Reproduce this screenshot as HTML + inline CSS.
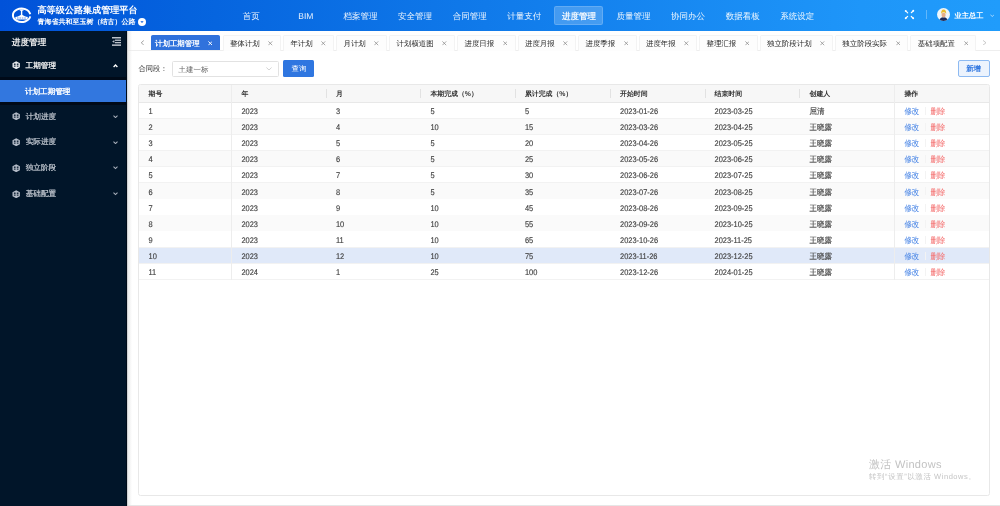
<!DOCTYPE html><html><head><meta charset="utf-8"><style>
*{margin:0;padding:0;box-sizing:border-box}
html,body{width:1000px;height:506px;overflow:hidden;background:#fff}
body{font-family:"Liberation Sans",sans-serif;text-rendering:geometricPrecision;position:relative;color:#333}
.t{position:absolute;white-space:nowrap;line-height:1}
#hdr{position:absolute;left:0;top:0;width:1000px;height:31px;background:linear-gradient(90deg,#0152d9 0%,#0563de 19%,#107aea 48.5%,#1e96f9 86%,#209cfb 100%)}
#side{position:absolute;left:0;top:31px;width:127.5px;height:475px;background:#011529}
.nav{position:absolute;top:0.7px;height:31px;width:54.6px;text-align:center;color:rgba(255,255,255,.92);font-size:8.5px;font-weight:500;line-height:31px;white-space:nowrap}
.navbox{position:absolute;top:5.9px;height:19.2px;background:rgba(255,255,255,.21);border:0.8px solid rgba(255,255,255,.16);border-radius:2.2px}
.tab{position:absolute;top:34.5px;height:16px;background:#fdfdfd;border:0.7px solid #f3f3f3;border-bottom:none;border-radius:1.5px 1.5px 0 0}
.tt{position:absolute;font-size:7.45px;color:#1f1f1f;font-weight:500;line-height:1;white-space:nowrap}
.th{position:absolute;font-size:6.9px;font-weight:bold;color:#333;line-height:1;white-space:nowrap}
.td{position:absolute;font-size:7.45px;color:#404040;-webkit-text-stroke:0.13px #404040;line-height:1;white-space:nowrap;transform:scaleY(1.1);transform-origin:0 0}
.sep{position:absolute;background:#e4e4e4}
.mi{position:absolute;font-size:7.6px;color:#bfc5ce;-webkit-text-stroke:0.22px #bfc5ce;line-height:1;white-space:nowrap}
</style></head><body><div id="root" style="position:absolute;left:0;top:0;width:1000px;height:506px;will-change:transform;background:#fff">
<div id="hdr"></div>
<svg style="position:absolute;left:0;top:0" width="40" height="31" viewBox="0 0 40 31">
<path d="M30.2 14.2 A8.7 6.75 0 1 0 30.2 16.4" fill="none" stroke="#fff" stroke-width="2"/>
<rect x="20.9" y="9.8" width="1.4" height="5.6" fill="#fff"/><rect x="19.8" y="9.5" width="3.6" height="1.2" fill="#fff"/>
<path d="M17 16.9 L21.6 14.6 L26.2 16.9Z" fill="#fff"/>
<rect x="15.5" y="16.7" width="12.1" height="2.7" rx="0.5" fill="#fff"/>
<path d="M17 17.6 h1.6 v0.9 h-1.6z M19.4 17.6 h1.6 v0.9 h-1.6z M21.8 17.6 h1.6 v0.9 h-1.6z M24.2 17.6 h1.6 v0.9 h-1.6z" fill="#6d95e6"/>
</svg>
<div class="t" style="left:37.5px;top:6.4px;font-size:9.1px;font-weight:900;color:#fff">高等级公路集成管理平台</div>
<div class="t" style="left:37.6px;top:18.9px;font-size:7px;font-weight:900;color:#fff">青海省共和至玉树（结古）公路</div>
<svg style="position:absolute;left:138px;top:18.2px" width="8" height="8" viewBox="0 0 8 8"><circle cx="4" cy="4" r="4" fill="#fff"/><path d="M2.4 3.2 L5.6 3.2 L4 5.1Z" fill="#0a5ddb"/></svg>
<div class="nav" style="left:224.00px">首页</div>
<div class="nav" style="left:278.60px">BIM</div>
<div class="nav" style="left:333.20px">档案管理</div>
<div class="nav" style="left:387.80px">安全管理</div>
<div class="nav" style="left:442.40px">合同管理</div>
<div class="nav" style="left:497.00px">计量支付</div>
<div class="navbox" style="left:553.90px;width:49.00px"></div>
<div class="nav" style="left:551.60px;font-weight:bold">进度管理</div>
<div class="nav" style="left:606.20px">质量管理</div>
<div class="nav" style="left:660.80px">协同办公</div>
<div class="nav" style="left:715.40px">数据看板</div>
<div class="nav" style="left:770.00px">系统设定</div>
<svg style="position:absolute;left:904px;top:9px" width="11" height="11" viewBox="0 0 11 11" fill="#fff" stroke="#fff" stroke-width="1.2" stroke-linecap="round">
<path d="M1.9 2.1 L3.7 3.9 M9.1 2.0 L7.3 3.7 M1.9 9.0 L3.6 7.4 M9.0 9.1 L7.3 7.5"/>
<circle cx="1.7" cy="1.9" r="0.95" stroke="none"/><circle cx="9.3" cy="1.8" r="0.95" stroke="none"/><circle cx="1.7" cy="9.2" r="0.95" stroke="none"/><circle cx="9.2" cy="9.3" r="0.95" stroke="none"/>
</svg>
<div style="position:absolute;left:925.8px;top:10.2px;width:0.8px;height:8.4px;background:rgba(255,255,255,.3)"></div>
<svg style="position:absolute;left:937px;top:8.4px" width="13" height="13" viewBox="0 0 13 13">
<defs><clipPath id="cc"><circle cx="6.5" cy="6.5" r="6.5"/></clipPath></defs>
<g clip-path="url(#cc)"><rect width="13" height="13" fill="#eef6fb"/>
<path d="M2.2 13 Q2.6 9.4 6.5 9.2 Q10.4 9.4 10.8 13Z" fill="#1d2a58"/>
<ellipse cx="6.6" cy="7.1" rx="2.1" ry="2.4" fill="#e6ae8a"/>
<path d="M4.1 5.9 Q3.9 1.4 6.6 1.4 Q9.4 1.4 9.2 5.9 Q8.6 4.2 6.6 4.3 Q4.7 4.2 4.1 5.9Z" fill="#e9bd2e"/>
</g></svg>
<div class="t" style="left:954.5px;top:12px;font-size:7.25px;font-weight:900;color:#fff">业主总工</div>
<svg style="position:absolute;left:989.5px;top:14px" width="4.5" height="3.5" viewBox="0 0 4.5 3.5"><path d="M0.4 0.6 L2.25 2.6 L4.1 0.6" fill="none" stroke="rgba(255,255,255,.8)" stroke-width="0.7"/></svg>
<div id="side"></div>
<div class="t" style="left:11.8px;top:38.3px;font-size:8.65px;color:#ececec;font-weight:700">进度管理</div>
<svg style="position:absolute;left:111.8px;top:36.9px" width="9.2" height="9.2" viewBox="0 0 9.2 9.2" fill="#bcc2cb">
<rect x="0" y="0" width="9.2" height="1.5"/><rect x="3" y="2.6" width="6.2" height="1.3"/><rect x="3" y="5.0" width="6.2" height="1.3"/><rect x="0" y="7.4" width="9.2" height="1.5"/>
<path d="M0.2 4.45 L2.4 2.9 L2.4 6.0Z"/></svg>
<svg style="position:absolute;left:11.8px;top:60.8px" width="8.4" height="8.4" viewBox="0 0 8.4 8.4">
<path d="M4.2 0.2 L7.9 2.2 L7.9 6.2 L4.2 8.2 L0.5 6.2 L0.5 2.2Z" fill="#e8ebef"/>
<path d="M1.9 2.6 L3.6 2.6 L3.6 3.9 L1.9 3.9Z M4.8 2.6 L6.5 2.6 L6.5 3.9 L4.8 3.9Z M1.9 4.5 L3.6 4.5 L3.6 5.8 L1.9 5.8Z M4.8 4.5 L6.5 4.5 L6.5 5.8 L4.8 5.8Z" fill="#011529" opacity="0.85"/>
</svg>
<div class="mi" style="left:25.6px;top:61.9px;color:#f4f4f4;-webkit-text-stroke:0.25px #f4f4f4">工期管理</div>
<svg style="position:absolute;left:112.6px;top:64.2px" width="5" height="3.5" viewBox="0 0 5 3.5"><path d="M0.6 3 L2.5 1 L4.4 3" fill="none" stroke="#fff" stroke-width="1.3"/></svg>
<div style="position:absolute;left:0;top:77px;width:127.5px;height:28px;background:#000a18"></div>
<div style="position:absolute;left:0;top:80px;width:127.5px;height:22px;background:#3277df"></div>
<div class="mi" style="left:24.9px;top:87.5px;color:#fff;-webkit-text-stroke:0.3px #fff">计划工期管理</div>
<svg style="position:absolute;left:11.8px;top:112.1px" width="8.4" height="8.4" viewBox="0 0 8.4 8.4">
<path d="M4.2 0.2 L7.9 2.2 L7.9 6.2 L4.2 8.2 L0.5 6.2 L0.5 2.2Z" fill="#b4bcc8"/>
<path d="M1.9 2.6 L3.6 2.6 L3.6 3.9 L1.9 3.9Z M4.8 2.6 L6.5 2.6 L6.5 3.9 L4.8 3.9Z M1.9 4.5 L3.6 4.5 L3.6 5.8 L1.9 5.8Z M4.8 4.5 L6.5 4.5 L6.5 5.8 L4.8 5.8Z" fill="#011529" opacity="0.85"/>
</svg>
<div class="mi" style="left:25.7px;top:112.50px">计划进度</div>
<svg style="position:absolute;left:112.8px;top:114.80px" width="5" height="3.5" viewBox="0 0 5 3.5"><path d="M0.5 0.6 L2.5 2.6 L4.5 0.6" fill="none" stroke="#aab1bc" stroke-width="1.05"/></svg>
<svg style="position:absolute;left:11.8px;top:137.8px" width="8.4" height="8.4" viewBox="0 0 8.4 8.4">
<path d="M4.2 0.2 L7.9 2.2 L7.9 6.2 L4.2 8.2 L0.5 6.2 L0.5 2.2Z" fill="#b4bcc8"/>
<path d="M1.9 2.6 L3.6 2.6 L3.6 3.9 L1.9 3.9Z M4.8 2.6 L6.5 2.6 L6.5 3.9 L4.8 3.9Z M1.9 4.5 L3.6 4.5 L3.6 5.8 L1.9 5.8Z M4.8 4.5 L6.5 4.5 L6.5 5.8 L4.8 5.8Z" fill="#011529" opacity="0.85"/>
</svg>
<div class="mi" style="left:25.7px;top:138.20px">实际进度</div>
<svg style="position:absolute;left:112.8px;top:140.50px" width="5" height="3.5" viewBox="0 0 5 3.5"><path d="M0.5 0.6 L2.5 2.6 L4.5 0.6" fill="none" stroke="#aab1bc" stroke-width="1.05"/></svg>
<svg style="position:absolute;left:11.8px;top:163.60000000000002px" width="8.4" height="8.4" viewBox="0 0 8.4 8.4">
<path d="M4.2 0.2 L7.9 2.2 L7.9 6.2 L4.2 8.2 L0.5 6.2 L0.5 2.2Z" fill="#b4bcc8"/>
<path d="M1.9 2.6 L3.6 2.6 L3.6 3.9 L1.9 3.9Z M4.8 2.6 L6.5 2.6 L6.5 3.9 L4.8 3.9Z M1.9 4.5 L3.6 4.5 L3.6 5.8 L1.9 5.8Z M4.8 4.5 L6.5 4.5 L6.5 5.8 L4.8 5.8Z" fill="#011529" opacity="0.85"/>
</svg>
<div class="mi" style="left:25.7px;top:164.00px">独立阶段</div>
<svg style="position:absolute;left:112.8px;top:166.30px" width="5" height="3.5" viewBox="0 0 5 3.5"><path d="M0.5 0.6 L2.5 2.6 L4.5 0.6" fill="none" stroke="#aab1bc" stroke-width="1.05"/></svg>
<svg style="position:absolute;left:11.8px;top:189.70000000000002px" width="8.4" height="8.4" viewBox="0 0 8.4 8.4">
<path d="M4.2 0.2 L7.9 2.2 L7.9 6.2 L4.2 8.2 L0.5 6.2 L0.5 2.2Z" fill="#b4bcc8"/>
<path d="M1.9 2.6 L3.6 2.6 L3.6 3.9 L1.9 3.9Z M4.8 2.6 L6.5 2.6 L6.5 3.9 L4.8 3.9Z M1.9 4.5 L3.6 4.5 L3.6 5.8 L1.9 5.8Z M4.8 4.5 L6.5 4.5 L6.5 5.8 L4.8 5.8Z" fill="#011529" opacity="0.85"/>
</svg>
<div class="mi" style="left:25.7px;top:190.10px">基础配置</div>
<svg style="position:absolute;left:112.8px;top:192.40px" width="5" height="3.5" viewBox="0 0 5 3.5"><path d="M0.5 0.6 L2.5 2.6 L4.5 0.6" fill="none" stroke="#aab1bc" stroke-width="1.05"/></svg>
<div style="position:absolute;left:127.5px;top:50.1px;width:872.5px;height:1px;background:#eeeeee"></div>
<div style="position:absolute;left:127.3px;top:31px;width:4.5px;height:475px;background:linear-gradient(90deg,#e6e6e6,rgba(255,255,255,0))"></div>
<div style="position:absolute;left:126.3px;top:31px;width:1px;height:475px;background:#000b18"></div>
<svg style="position:absolute;left:139.5px;top:39.8px" width="5" height="5.5" viewBox="0 0 5 5.5"><path d="M3.8 0.5 L1.2 2.75 L3.8 5.0" fill="none" stroke="#999" stroke-width="0.9"/></svg>
<svg style="position:absolute;left:982px;top:39.8px" width="5" height="5.5" viewBox="0 0 5 5.5"><path d="M1 0.4 L4 2.75 L1 5.1" fill="none" stroke="#bbb" stroke-width="0.8"/></svg>
<div style="position:absolute;left:151px;top:34.6px;width:69.2px;height:15.8px;background:#3072dc;border-radius:1.8px 1.8px 0 0"></div>
<div class="tt" style="left:155px;top:40.0px;color:#fff;font-weight:bold">计划工期管理</div>
<svg style="position:absolute;left:207.70px;top:41.20px" width="4.6" height="4.6" viewBox="0 0 4.6 4.6"><path d="M0.4 0.4 L4.2 4.2 M4.2 0.4 L0.4 4.2" fill="none" stroke="#fff" stroke-width="0.95"/></svg>
<div class="tab" style="left:222.60px;width:58.40px"></div>
<div class="tt" style="left:229.90px;top:39.9px">整体计划</div>
<svg style="position:absolute;left:268.20px;top:41.10px" width="4.6" height="4.6" viewBox="0 0 4.6 4.6"><path d="M0.4 0.4 L4.2 4.2 M4.2 0.4 L0.4 4.2" fill="none" stroke="#8a8a8a" stroke-width="0.75"/></svg>
<div class="tab" style="left:283.10px;width:50.95px"></div>
<div class="tt" style="left:290.40px;top:39.9px">年计划</div>
<svg style="position:absolute;left:321.25px;top:41.10px" width="4.6" height="4.6" viewBox="0 0 4.6 4.6"><path d="M0.4 0.4 L4.2 4.2 M4.2 0.4 L0.4 4.2" fill="none" stroke="#8a8a8a" stroke-width="0.75"/></svg>
<div class="tab" style="left:336.15px;width:50.95px"></div>
<div class="tt" style="left:343.45px;top:39.9px">月计划</div>
<svg style="position:absolute;left:374.30px;top:41.10px" width="4.6" height="4.6" viewBox="0 0 4.6 4.6"><path d="M0.4 0.4 L4.2 4.2 M4.2 0.4 L0.4 4.2" fill="none" stroke="#8a8a8a" stroke-width="0.75"/></svg>
<div class="tab" style="left:389.20px;width:65.85px"></div>
<div class="tt" style="left:396.50px;top:39.9px">计划横道图</div>
<svg style="position:absolute;left:442.25px;top:41.10px" width="4.6" height="4.6" viewBox="0 0 4.6 4.6"><path d="M0.4 0.4 L4.2 4.2 M4.2 0.4 L0.4 4.2" fill="none" stroke="#8a8a8a" stroke-width="0.75"/></svg>
<div class="tab" style="left:457.15px;width:58.40px"></div>
<div class="tt" style="left:464.45px;top:39.9px">进度日报</div>
<svg style="position:absolute;left:502.75px;top:41.10px" width="4.6" height="4.6" viewBox="0 0 4.6 4.6"><path d="M0.4 0.4 L4.2 4.2 M4.2 0.4 L0.4 4.2" fill="none" stroke="#8a8a8a" stroke-width="0.75"/></svg>
<div class="tab" style="left:517.65px;width:58.40px"></div>
<div class="tt" style="left:524.95px;top:39.9px">进度月报</div>
<svg style="position:absolute;left:563.25px;top:41.10px" width="4.6" height="4.6" viewBox="0 0 4.6 4.6"><path d="M0.4 0.4 L4.2 4.2 M4.2 0.4 L0.4 4.2" fill="none" stroke="#8a8a8a" stroke-width="0.75"/></svg>
<div class="tab" style="left:578.15px;width:58.40px"></div>
<div class="tt" style="left:585.45px;top:39.9px">进度季报</div>
<svg style="position:absolute;left:623.75px;top:41.10px" width="4.6" height="4.6" viewBox="0 0 4.6 4.6"><path d="M0.4 0.4 L4.2 4.2 M4.2 0.4 L0.4 4.2" fill="none" stroke="#8a8a8a" stroke-width="0.75"/></svg>
<div class="tab" style="left:638.65px;width:58.40px"></div>
<div class="tt" style="left:645.95px;top:39.9px">进度年报</div>
<svg style="position:absolute;left:684.25px;top:41.10px" width="4.6" height="4.6" viewBox="0 0 4.6 4.6"><path d="M0.4 0.4 L4.2 4.2 M4.2 0.4 L0.4 4.2" fill="none" stroke="#8a8a8a" stroke-width="0.75"/></svg>
<div class="tab" style="left:699.15px;width:58.40px"></div>
<div class="tt" style="left:706.45px;top:39.9px">整理汇报</div>
<svg style="position:absolute;left:744.75px;top:41.10px" width="4.6" height="4.6" viewBox="0 0 4.6 4.6"><path d="M0.4 0.4 L4.2 4.2 M4.2 0.4 L0.4 4.2" fill="none" stroke="#8a8a8a" stroke-width="0.75"/></svg>
<div class="tab" style="left:759.65px;width:73.30px"></div>
<div class="tt" style="left:766.95px;top:39.9px">独立阶段计划</div>
<svg style="position:absolute;left:820.15px;top:41.10px" width="4.6" height="4.6" viewBox="0 0 4.6 4.6"><path d="M0.4 0.4 L4.2 4.2 M4.2 0.4 L0.4 4.2" fill="none" stroke="#8a8a8a" stroke-width="0.75"/></svg>
<div class="tab" style="left:835.05px;width:73.30px"></div>
<div class="tt" style="left:842.35px;top:39.9px">独立阶段实际</div>
<svg style="position:absolute;left:895.55px;top:41.10px" width="4.6" height="4.6" viewBox="0 0 4.6 4.6"><path d="M0.4 0.4 L4.2 4.2 M4.2 0.4 L0.4 4.2" fill="none" stroke="#8a8a8a" stroke-width="0.75"/></svg>
<div class="tab" style="left:910.45px;width:65.85px"></div>
<div class="tt" style="left:917.75px;top:39.9px">基础项配置</div>
<svg style="position:absolute;left:963.50px;top:41.10px" width="4.6" height="4.6" viewBox="0 0 4.6 4.6"><path d="M0.4 0.4 L4.2 4.2 M4.2 0.4 L0.4 4.2" fill="none" stroke="#8a8a8a" stroke-width="0.75"/></svg>
<div class="t" style="left:138.4px;top:65.4px;font-size:7.3px;color:#333;font-weight:500">合同段：</div>
<div style="position:absolute;left:171.5px;top:60.5px;width:107.5px;height:16.5px;border:0.8px solid #e2e2e2;border-radius:1.5px;background:#fff"></div>
<div class="t" style="left:178.6px;top:65.5px;font-size:7.45px;color:#666">土建一标</div>
<svg style="position:absolute;left:266px;top:66.8px" width="6" height="3.5" viewBox="0 0 6 3.5"><path d="M0.4 0.5 L3 3 L5.6 0.5" fill="none" stroke="#c0c0c0" stroke-width="0.7"/></svg>
<div style="position:absolute;left:283px;top:60.2px;width:31px;height:16.8px;background:#2f76e0;border-radius:1.5px"></div>
<div class="t" style="left:291.6px;top:65.2px;font-size:7.4px;color:#fff">查询</div>
<div style="position:absolute;left:957.5px;top:60.2px;width:32px;height:16.8px;background:#ecf3fd;border:1px solid #8dbaf2;border-radius:2px"></div>
<div class="t" style="left:966.2px;top:65.2px;font-size:7.4px;color:#2f76e0;font-weight:bold">新增</div>
<div style="position:absolute;left:138.0px;top:83.6px;width:851.50px;height:412.00px;border:1px solid #e8e8e8;border-radius:2.5px;background:#fff"></div>
<div style="position:absolute;left:139.0px;top:84.6px;width:849.50px;height:17.30px;background:#f7f7f7;border-radius:2px 2px 0 0"></div>
<div class="sep" style="left:139.0px;top:101.9px;width:849.50px;height:1px;background:#e8e8e8"></div>
<div class="th" style="left:148.5px;top:91.9px">期号</div>
<div class="th" style="left:241.4px;top:91.9px">年</div>
<div class="th" style="left:335.9px;top:91.9px">月</div>
<div class="th" style="left:430.4px;top:91.9px">本期完成（%）</div>
<div class="th" style="left:524.9px;top:91.9px">累计完成（%）</div>
<div class="th" style="left:620.0px;top:91.9px">开始时间</div>
<div class="th" style="left:714.5px;top:91.9px">结束时间</div>
<div class="th" style="left:809.5px;top:91.9px">创建人</div>
<div class="th" style="left:904.4px;top:91.9px">操作</div>
<div class="sep" style="left:325.8px;top:89px;width:0.8px;height:8.5px;background:#e2e2e2"></div>
<div class="sep" style="left:420.3px;top:89px;width:0.8px;height:8.5px;background:#e2e2e2"></div>
<div class="sep" style="left:514.8px;top:89px;width:0.8px;height:8.5px;background:#e2e2e2"></div>
<div class="sep" style="left:610.4px;top:89px;width:0.8px;height:8.5px;background:#e2e2e2"></div>
<div class="sep" style="left:704.9px;top:89px;width:0.8px;height:8.5px;background:#e2e2e2"></div>
<div class="sep" style="left:799.4px;top:89px;width:0.8px;height:8.5px;background:#e2e2e2"></div>
<div style="position:absolute;left:139.0px;top:102.60px;width:849.50px;height:16.10px;background:#fff"></div>
<div class="sep" style="left:139.0px;top:118.00px;width:849.50px;height:0.7px;background:#f2f2f2"></div>
<div class="td" style="left:148.5px;top:107.00px">1</div>
<div class="td" style="left:241.4px;top:107.00px">2023</div>
<div class="td" style="left:335.9px;top:107.00px">3</div>
<div class="td" style="left:430.4px;top:107.00px">5</div>
<div class="td" style="left:524.9px;top:107.00px">5</div>
<div class="td" style="left:620.0px;top:107.00px">2023-01-26</div>
<div class="td" style="left:714.5px;top:107.00px">2023-03-25</div>
<div class="td" style="left:809.5px;top:107.00px">屈清</div>
<div class="td" style="left:904.4px;top:107.00px;color:#4d88e6;-webkit-text-stroke:0.05px #4d88e6">修改</div>
<div class="sep" style="left:925.2px;top:106.90px;width:0.7px;height:8px;background:#f3f3f3"></div>
<div class="td" style="left:930.4px;top:107.00px;color:#f47070;-webkit-text-stroke:0.05px #f47070">删除</div>
<div style="position:absolute;left:139.0px;top:118.70px;width:849.50px;height:16.10px;background:#fafafa"></div>
<div class="sep" style="left:139.0px;top:134.10px;width:849.50px;height:0.7px;background:#f2f2f2"></div>
<div class="td" style="left:148.5px;top:123.10px">2</div>
<div class="td" style="left:241.4px;top:123.10px">2023</div>
<div class="td" style="left:335.9px;top:123.10px">4</div>
<div class="td" style="left:430.4px;top:123.10px">10</div>
<div class="td" style="left:524.9px;top:123.10px">15</div>
<div class="td" style="left:620.0px;top:123.10px">2023-03-26</div>
<div class="td" style="left:714.5px;top:123.10px">2023-04-25</div>
<div class="td" style="left:809.5px;top:123.10px">王晓露</div>
<div class="td" style="left:904.4px;top:123.10px;color:#4d88e6;-webkit-text-stroke:0.05px #4d88e6">修改</div>
<div class="sep" style="left:925.2px;top:123.00px;width:0.7px;height:8px;background:#f3f3f3"></div>
<div class="td" style="left:930.4px;top:123.10px;color:#f47070;-webkit-text-stroke:0.05px #f47070">删除</div>
<div style="position:absolute;left:139.0px;top:134.80px;width:849.50px;height:16.10px;background:#fff"></div>
<div class="sep" style="left:139.0px;top:150.20px;width:849.50px;height:0.7px;background:#f2f2f2"></div>
<div class="td" style="left:148.5px;top:139.20px">3</div>
<div class="td" style="left:241.4px;top:139.20px">2023</div>
<div class="td" style="left:335.9px;top:139.20px">5</div>
<div class="td" style="left:430.4px;top:139.20px">5</div>
<div class="td" style="left:524.9px;top:139.20px">20</div>
<div class="td" style="left:620.0px;top:139.20px">2023-04-26</div>
<div class="td" style="left:714.5px;top:139.20px">2023-05-25</div>
<div class="td" style="left:809.5px;top:139.20px">王晓露</div>
<div class="td" style="left:904.4px;top:139.20px;color:#4d88e6;-webkit-text-stroke:0.05px #4d88e6">修改</div>
<div class="sep" style="left:925.2px;top:139.10px;width:0.7px;height:8px;background:#f3f3f3"></div>
<div class="td" style="left:930.4px;top:139.20px;color:#f47070;-webkit-text-stroke:0.05px #f47070">删除</div>
<div style="position:absolute;left:139.0px;top:150.90px;width:849.50px;height:16.10px;background:#fafafa"></div>
<div class="sep" style="left:139.0px;top:166.30px;width:849.50px;height:0.7px;background:#f2f2f2"></div>
<div class="td" style="left:148.5px;top:155.30px">4</div>
<div class="td" style="left:241.4px;top:155.30px">2023</div>
<div class="td" style="left:335.9px;top:155.30px">6</div>
<div class="td" style="left:430.4px;top:155.30px">5</div>
<div class="td" style="left:524.9px;top:155.30px">25</div>
<div class="td" style="left:620.0px;top:155.30px">2023-05-26</div>
<div class="td" style="left:714.5px;top:155.30px">2023-06-25</div>
<div class="td" style="left:809.5px;top:155.30px">王晓露</div>
<div class="td" style="left:904.4px;top:155.30px;color:#4d88e6;-webkit-text-stroke:0.05px #4d88e6">修改</div>
<div class="sep" style="left:925.2px;top:155.20px;width:0.7px;height:8px;background:#f3f3f3"></div>
<div class="td" style="left:930.4px;top:155.30px;color:#f47070;-webkit-text-stroke:0.05px #f47070">删除</div>
<div style="position:absolute;left:139.0px;top:167.00px;width:849.50px;height:16.10px;background:#fff"></div>
<div class="sep" style="left:139.0px;top:182.40px;width:849.50px;height:0.7px;background:#f2f2f2"></div>
<div class="td" style="left:148.5px;top:171.40px">5</div>
<div class="td" style="left:241.4px;top:171.40px">2023</div>
<div class="td" style="left:335.9px;top:171.40px">7</div>
<div class="td" style="left:430.4px;top:171.40px">5</div>
<div class="td" style="left:524.9px;top:171.40px">30</div>
<div class="td" style="left:620.0px;top:171.40px">2023-06-26</div>
<div class="td" style="left:714.5px;top:171.40px">2023-07-25</div>
<div class="td" style="left:809.5px;top:171.40px">王晓露</div>
<div class="td" style="left:904.4px;top:171.40px;color:#4d88e6;-webkit-text-stroke:0.05px #4d88e6">修改</div>
<div class="sep" style="left:925.2px;top:171.30px;width:0.7px;height:8px;background:#f3f3f3"></div>
<div class="td" style="left:930.4px;top:171.40px;color:#f47070;-webkit-text-stroke:0.05px #f47070">删除</div>
<div style="position:absolute;left:139.0px;top:183.10px;width:849.50px;height:16.10px;background:#fafafa"></div>
<div class="sep" style="left:139.0px;top:198.50px;width:849.50px;height:0.7px;background:#f2f2f2"></div>
<div class="td" style="left:148.5px;top:187.50px">6</div>
<div class="td" style="left:241.4px;top:187.50px">2023</div>
<div class="td" style="left:335.9px;top:187.50px">8</div>
<div class="td" style="left:430.4px;top:187.50px">5</div>
<div class="td" style="left:524.9px;top:187.50px">35</div>
<div class="td" style="left:620.0px;top:187.50px">2023-07-26</div>
<div class="td" style="left:714.5px;top:187.50px">2023-08-25</div>
<div class="td" style="left:809.5px;top:187.50px">王晓露</div>
<div class="td" style="left:904.4px;top:187.50px;color:#4d88e6;-webkit-text-stroke:0.05px #4d88e6">修改</div>
<div class="sep" style="left:925.2px;top:187.40px;width:0.7px;height:8px;background:#f3f3f3"></div>
<div class="td" style="left:930.4px;top:187.50px;color:#f47070;-webkit-text-stroke:0.05px #f47070">删除</div>
<div style="position:absolute;left:139.0px;top:199.20px;width:849.50px;height:16.10px;background:#fff"></div>
<div class="sep" style="left:139.0px;top:214.60px;width:849.50px;height:0.7px;background:#f2f2f2"></div>
<div class="td" style="left:148.5px;top:203.60px">7</div>
<div class="td" style="left:241.4px;top:203.60px">2023</div>
<div class="td" style="left:335.9px;top:203.60px">9</div>
<div class="td" style="left:430.4px;top:203.60px">10</div>
<div class="td" style="left:524.9px;top:203.60px">45</div>
<div class="td" style="left:620.0px;top:203.60px">2023-08-26</div>
<div class="td" style="left:714.5px;top:203.60px">2023-09-25</div>
<div class="td" style="left:809.5px;top:203.60px">王晓露</div>
<div class="td" style="left:904.4px;top:203.60px;color:#4d88e6;-webkit-text-stroke:0.05px #4d88e6">修改</div>
<div class="sep" style="left:925.2px;top:203.50px;width:0.7px;height:8px;background:#f3f3f3"></div>
<div class="td" style="left:930.4px;top:203.60px;color:#f47070;-webkit-text-stroke:0.05px #f47070">删除</div>
<div style="position:absolute;left:139.0px;top:215.30px;width:849.50px;height:16.10px;background:#fafafa"></div>
<div class="sep" style="left:139.0px;top:230.70px;width:849.50px;height:0.7px;background:#f2f2f2"></div>
<div class="td" style="left:148.5px;top:219.70px">8</div>
<div class="td" style="left:241.4px;top:219.70px">2023</div>
<div class="td" style="left:335.9px;top:219.70px">10</div>
<div class="td" style="left:430.4px;top:219.70px">10</div>
<div class="td" style="left:524.9px;top:219.70px">55</div>
<div class="td" style="left:620.0px;top:219.70px">2023-09-26</div>
<div class="td" style="left:714.5px;top:219.70px">2023-10-25</div>
<div class="td" style="left:809.5px;top:219.70px">王晓露</div>
<div class="td" style="left:904.4px;top:219.70px;color:#4d88e6;-webkit-text-stroke:0.05px #4d88e6">修改</div>
<div class="sep" style="left:925.2px;top:219.60px;width:0.7px;height:8px;background:#f3f3f3"></div>
<div class="td" style="left:930.4px;top:219.70px;color:#f47070;-webkit-text-stroke:0.05px #f47070">删除</div>
<div style="position:absolute;left:139.0px;top:231.40px;width:849.50px;height:16.10px;background:#fff"></div>
<div class="sep" style="left:139.0px;top:246.80px;width:849.50px;height:0.7px;background:#f2f2f2"></div>
<div class="td" style="left:148.5px;top:235.80px">9</div>
<div class="td" style="left:241.4px;top:235.80px">2023</div>
<div class="td" style="left:335.9px;top:235.80px">11</div>
<div class="td" style="left:430.4px;top:235.80px">10</div>
<div class="td" style="left:524.9px;top:235.80px">65</div>
<div class="td" style="left:620.0px;top:235.80px">2023-10-26</div>
<div class="td" style="left:714.5px;top:235.80px">2023-11-25</div>
<div class="td" style="left:809.5px;top:235.80px">王晓露</div>
<div class="td" style="left:904.4px;top:235.80px;color:#4d88e6;-webkit-text-stroke:0.05px #4d88e6">修改</div>
<div class="sep" style="left:925.2px;top:235.70px;width:0.7px;height:8px;background:#f3f3f3"></div>
<div class="td" style="left:930.4px;top:235.80px;color:#f47070;-webkit-text-stroke:0.05px #f47070">删除</div>
<div style="position:absolute;left:139.0px;top:247.50px;width:849.50px;height:16.10px;background:#e0e9f9"></div>
<div class="sep" style="left:139.0px;top:262.90px;width:849.50px;height:0.7px;background:#f2f2f2"></div>
<div class="td" style="left:148.5px;top:251.90px">10</div>
<div class="td" style="left:241.4px;top:251.90px">2023</div>
<div class="td" style="left:335.9px;top:251.90px">12</div>
<div class="td" style="left:430.4px;top:251.90px">10</div>
<div class="td" style="left:524.9px;top:251.90px">75</div>
<div class="td" style="left:620.0px;top:251.90px">2023-11-26</div>
<div class="td" style="left:714.5px;top:251.90px">2023-12-25</div>
<div class="td" style="left:809.5px;top:251.90px">王晓露</div>
<div class="td" style="left:904.4px;top:251.90px;color:#4d88e6;-webkit-text-stroke:0.05px #4d88e6">修改</div>
<div class="sep" style="left:925.2px;top:251.80px;width:0.7px;height:8px;background:#f3f3f3"></div>
<div class="td" style="left:930.4px;top:251.90px;color:#f47070;-webkit-text-stroke:0.05px #f47070">删除</div>
<div style="position:absolute;left:139.0px;top:263.60px;width:849.50px;height:16.10px;background:#fff"></div>
<div class="sep" style="left:139.0px;top:279.00px;width:849.50px;height:0.7px;background:#f2f2f2"></div>
<div class="td" style="left:148.5px;top:268.00px">11</div>
<div class="td" style="left:241.4px;top:268.00px">2024</div>
<div class="td" style="left:335.9px;top:268.00px">1</div>
<div class="td" style="left:430.4px;top:268.00px">25</div>
<div class="td" style="left:524.9px;top:268.00px">100</div>
<div class="td" style="left:620.0px;top:268.00px">2023-12-26</div>
<div class="td" style="left:714.5px;top:268.00px">2024-01-25</div>
<div class="td" style="left:809.5px;top:268.00px">王晓露</div>
<div class="td" style="left:904.4px;top:268.00px;color:#4d88e6;-webkit-text-stroke:0.05px #4d88e6">修改</div>
<div class="sep" style="left:925.2px;top:267.90px;width:0.7px;height:8px;background:#f3f3f3"></div>
<div class="td" style="left:930.4px;top:268.00px;color:#f47070;-webkit-text-stroke:0.05px #f47070">删除</div>
<div class="sep" style="left:231px;top:84.6px;width:0.8px;height:195.10px;background:#ededed"></div>
<div class="sep" style="left:894.4px;top:84.6px;width:0.8px;height:195.10px;background:#ededed"></div>
<div class="t" style="left:869px;top:459.6px;font-size:11px;letter-spacing:0.3px;color:#c2c2c2">激活 Windows</div>
<div class="t" style="left:869px;top:473.3px;font-size:7.5px;letter-spacing:0.55px;color:#c4c4c4">转到“设置”以激活 Windows。</div>
<div style="position:absolute;left:127.5px;top:504.8px;width:872.5px;height:1.2px;background:#e6e6e6"></div>
</div></body></html>
